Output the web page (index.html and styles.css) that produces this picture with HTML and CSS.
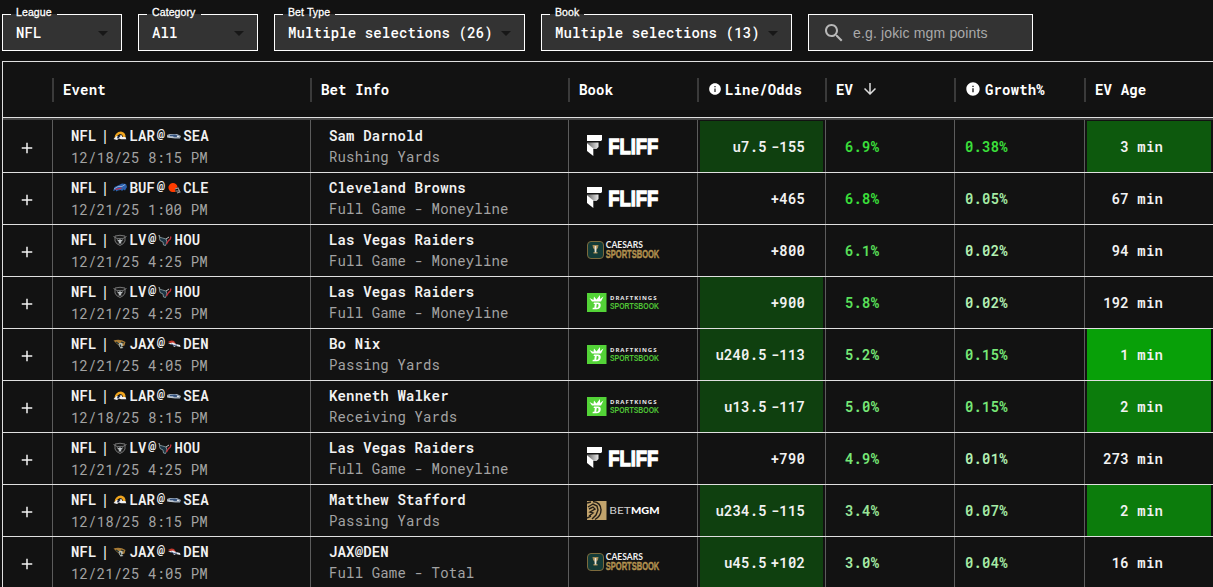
FILE: index.html
```html
<!DOCTYPE html>
<html lang="en">
<head>
  <meta charset="UTF-8">
  <meta name="viewport" content="width=device-width, initial-scale=1.0">
  <title>Positive EV</title>
  <link rel="stylesheet" href="styles.css">
</head>
<body>
  <!-- shared icons -->
  <svg class="sprite" width="0" height="0">
    <defs>
      <linearGradient id="fold" x1="0" y1="0" x2="1" y2="0">
        <stop offset="0.2" stop-color="#777"/>
        <stop offset="1" stop-color="#e8e8e8"/>
      </linearGradient>
    </defs>
    <symbol id="caret" viewBox="0 0 24 24"><path d="M7 10l5 5 5-5z"/></symbol>
    <symbol id="search" viewBox="0 0 24 24"><path d="M15.5 14h-.79l-.28-.27C15.41 12.59 16 11.11 16 9.5 16 5.91 13.09 3 9.5 3S3 5.91 3 9.5 5.91 16 9.5 16c1.61 0 3.09-.59 4.23-1.57l.27.28v.79l5 4.99L20.49 19l-4.99-5zm-6 0C7.01 14 5 11.99 5 9.5S7.01 5 9.5 5 14 7.01 14 9.5 11.99 14 9.5 14z"/></symbol>
    <symbol id="info" viewBox="0 0 24 24"><path d="M12 2C6.48 2 2 6.48 2 12s4.48 10 10 10 10-4.48 10-10S17.52 2 12 2zm1 15h-2v-6h2v6zm0-8h-2V7h2v2z"/></symbol>
    <symbol id="down" viewBox="0 0 24 24"><path d="M20 12l-1.41-1.41L13 16.17V4h-2v12.17l-5.58-5.59L4 12l8 8 8-8z"/></symbol>
    <symbol id="plus" viewBox="0 0 24 24"><path d="M19 13h-6v6h-2v-6H5v-2h6V5h2v6h6v2z"/></symbol>

    <symbol id="lar" viewBox="0 0 14 14">
      <path d="M1.500 9Q2 3 8 2.500Q13 3.500 12.500 8.500L10 9Q10 5 7 5Q4 6 4 8z" fill="#f0a51e"/>
      <path d="M.5 10L3.500 7l2.500 1 2-2.500L9.500 8l3 0 .8 2.200H8L6 9.500 4 11z" fill="#f2f2f2"/>
      <path d="M4 8.500l2.500-2.500 1 1L5 10z" fill="#1d2b4c"/>
    </symbol>
    <symbol id="sea" viewBox="0 0 14 14">
      <path d="M0 6L2.500 5H10l4 2-1 2.500H8L0 8.500z" fill="#9aa6b4"/>
      <path d="M3 6l5-.5 4 1.500-3 1-6-.5z" fill="#34527e"/>
      <path d="M0 7.500h6l1 1H2zM10 6.500l2 .5v1h-2z" fill="#dce2e8"/>
    </symbol>
    <symbol id="buf" viewBox="0 0 14 14">
      <path d="M0 10l1.500-4L5 4.500 9 2.500l4 .5 1 3-2 3.500-1.500-1L9 10l-1-1-3 .5-2 1 0-1.500z" fill="#2b62ae"/>
      <path d="M1 8l4-2.500 4 0 3-2" stroke="#b9c9e8" stroke-width=".7" fill="none"/>
      <path d="M2.500 8.500l6-1.500" stroke="#d7263d" stroke-width="1.100"/>
    </symbol>
    <symbol id="cle" viewBox="0 0 14 14">
      <path d="M1.500 7a4.500 4.500 0 0 1 9-1L8 8l.5 3H5Q2 10.500 1.500 7z" fill="#ff3c00"/>
      <path d="M8 8l3-1 2 4-3 1M8.500 10h4" stroke="#a09a98" stroke-width="1.100" fill="none"/>
    </symbol>
    <symbol id="lv" viewBox="0 0 14 14">
      <path d="M2 3q5-1.500 10 0v5q-1 3-5 4.500Q3 11 2 8z" fill="#1a1a1a" stroke="#8b8b8b" stroke-width=".8"/>
      <path d="M4 5.500h6l-.5 2L8 9l.5 1.500h-3L6 9 4.500 7.500z" fill="#b9bdbf"/>
      <path d="M4.500 6.500h2M7.500 6.500h2" stroke="#222" stroke-width="1"/>
      <path d="M.5 3.500l3.500 2M13.500 3.500L10 5.500" stroke="#777" stroke-width="1"/>
    </symbol>
    <symbol id="hou" viewBox="0 0 14 14">
      <path d="M1 2Q1 5 4.500 5L8 6l1 3-1.500 3.500-2-.5L5 9 2 7.500z" fill="#1b3342" stroke="#93a5aa" stroke-width=".8"/>
      <path d="M12.500 3.500Q13.500 6 10.500 7.500L8.500 11" stroke="#c62f3a" stroke-width="1.400" fill="none"/>
      <path d="M8 6l3-2" stroke="#d8dcdc" stroke-width=".9"/>
    </symbol>
    <symbol id="jax" viewBox="0 0 14 14">
      <path d="M.5 3.500Q7 1.500 12.500 5L11.500 8.500 8 10 4 7z" fill="#a87b35"/>
      <path d="M5 6l4 0 1 2.500-1.500 1 2 1.500-3 .5L6 9z" fill="#b9c0ba"/>
      <path d="M3 5l3 2M8 5l3 1M7 7.500l1 2.500" stroke="#1d343b" stroke-width="1.200"/>
    </symbol>
    <symbol id="den" viewBox="0 0 14 14">
      <path d="M1 5q3-2.500 6-1l2 3H5z" fill="#c2382c"/>
      <path d="M1 6.500l5-1 3 1.500 4 1 .5 2L9 9l-2 1-1-2z" fill="#e9ecf2"/>
      <path d="M4 7l3 1.500 3-.5" stroke="#26406c" stroke-width=".9" fill="none"/>
    </symbol>

    <symbol id="fliff" viewBox="0 0 74 25">
      <path d="M0 1h15v5L14 7H0z" fill="#fff"/>
      <path d="M0 8.500h11.500v4.500L9.500 15H6z" fill="url(#fold)"/>
      <path d="M0 9l6.300 5.500V22L0 17z" fill="#fff"/>
      <text class="fliff-text" x="21.300" y="19.500" textLength="50" lengthAdjust="spacingAndGlyphs">FLIFF</text>
    </symbol>
    <symbol id="caesars" viewBox="0 0 74 25">
      <rect x=".5" y="3.500" width="16" height="17" rx="3.500" fill="#153c38" stroke="#7c6a3c"/>
      <path d="M5.500 7h6q0 3.500-2 4.500L9 14h1.500v1.500h-4V14H8l-.5-2.500q-2-1-2-4.500z" fill="#a68b55"/>
      <path d="M7.700 8h1.600v6.500H7.700z" fill="#e6e6df"/>
      <text class="caesars-top" x="18.800" y="10.200" textLength="37" lengthAdjust="spacingAndGlyphs">CAESARS</text>
      <text class="caesars-bottom" x="18.800" y="20.100" textLength="53.500" lengthAdjust="spacingAndGlyphs">SPORTSBOOK</text>
    </symbol>
    <symbol id="draftkings" viewBox="0 0 74 25">
      <path d="M0 3h19.500v19H0z" fill="#53d337"/>
      <path d="M2.500 8l4 2L7 6.500l2.500 3L13 5l0 4 3.500-2.500-2.500 5H5z" fill="#fff"/>
      <path d="M7 12.500h4q3 0 2.700 3.300T9.500 19.300H5.500l.3-1.500h1.500l.5-3.800H6.500z" fill="#fff"/>
      <path d="M9.800 14h.8q1.200 0 .9 1.900t-1.700 1.900h-.6z" fill="#53d337"/>
      <text class="dk-top" x="23" y="10.400" textLength="46.500">DRAFTKINGS</text>
      <text class="dk-bottom" x="23" y="19.200" textLength="49" lengthAdjust="spacingAndGlyphs">SPORTSBOOK</text>
    </symbol>
    <symbol id="betmgm" viewBox="0 0 74 25">
      <path d="M0 3h19.500v19H0z" fill="#c2a36c"/>
      <path d="M6 3.500q8 1 8 8.500 0 6-6 9.500M1 9l5-3 4 2 1 4-2 5-4 4M2 11l4-2 2 2-5 3 3 1-4 3M0 5l4-1M0 20l4-2" stroke="#241f18" stroke-width="1.400" fill="none"/>
      <text class="mgm-thin" x="22.300" y="16.200" textLength="21.500" lengthAdjust="spacingAndGlyphs">BET</text>
      <text class="mgm-bold" x="44" y="16.200" textLength="28.500" lengthAdjust="spacingAndGlyphs">MGM</text>
    </symbol>
  </svg>

  <div class="filters">
    <div class="select">
      <label>League</label>
      <span>NFL</span>
      <svg><use href="#caret"/></svg>
    </div>
    <div class="select">
      <label>Category</label>
      <span>All</span>
      <svg><use href="#caret"/></svg>
    </div>
    <div class="select wide">
      <label>Bet Type</label>
      <span>Multiple selections (26)</span>
      <svg><use href="#caret"/></svg>
    </div>
    <div class="select wide">
      <label>Book</label>
      <span>Multiple selections (13)</span>
      <svg><use href="#caret"/></svg>
    </div>
    <div class="search">
      <svg><use href="#search"/></svg>
      <input type="text" placeholder="e.g. jokic mgm points">
    </div>
  </div>

  <div class="table">
    <div class="row header">
      <div></div>
      <div class="head">Event</div>
      <div class="head">Bet Info</div>
      <div class="head">Book</div>
      <div class="head"><svg class="info small"><use href="#info"/></svg>Line/Odds</div>
      <div class="head">EV<svg class="sort"><use href="#down"/></svg></div>
      <div class="head"><svg class="info"><use href="#info"/></svg>Growth%</div>
      <div class="head">EV Age</div>
    </div>

    <div class="row">
      <div class="cell expand"><svg><use href="#plus"/></svg></div>
      <div class="cell event">
        <div class="teams"><b>NFL |</b><svg><use href="#lar"/></svg>LAR<i>@</i><svg><use href="#sea"/></svg>SEA</div>
        <div class="sub">12/18/25 8:15 PM</div>
      </div>
      <div class="cell bet"><div>Sam Darnold</div><div class="sub">Rushing Yards</div></div>
      <div class="cell book"><svg><use href="#fliff"/></svg></div>
      <div class="cell odds"><div class="fill hot"><span>u7.5</span><span>-155</span></div></div>
      <div class="cell ev g1">6.9%</div>
      <div class="cell growth g1">0.38%</div>
      <div class="cell age"><div class="fill age-3">3 min</div></div>
    </div>

    <div class="row">
      <div class="cell expand"><svg><use href="#plus"/></svg></div>
      <div class="cell event">
        <div class="teams"><b>NFL |</b><svg><use href="#buf"/></svg>BUF<i>@</i><svg><use href="#cle"/></svg>CLE</div>
        <div class="sub">12/21/25 1:00 PM</div>
      </div>
      <div class="cell bet"><div>Cleveland Browns</div><div class="sub">Full Game - Moneyline</div></div>
      <div class="cell book"><svg><use href="#fliff"/></svg></div>
      <div class="cell odds"><div class="fill"><span>+465</span></div></div>
      <div class="cell ev g1">6.8%</div>
      <div class="cell growth g5">0.05%</div>
      <div class="cell age"><div class="fill">67 min</div></div>
    </div>

    <div class="row">
      <div class="cell expand"><svg><use href="#plus"/></svg></div>
      <div class="cell event">
        <div class="teams"><b>NFL |</b><svg><use href="#lv"/></svg>LV<i>@</i><svg><use href="#hou"/></svg>HOU</div>
        <div class="sub">12/21/25 4:25 PM</div>
      </div>
      <div class="cell bet"><div>Las Vegas Raiders</div><div class="sub">Full Game - Moneyline</div></div>
      <div class="cell book"><svg><use href="#caesars"/></svg></div>
      <div class="cell odds"><div class="fill"><span>+800</span></div></div>
      <div class="cell ev g2">6.1%</div>
      <div class="cell growth g6">0.02%</div>
      <div class="cell age"><div class="fill">94 min</div></div>
    </div>

    <div class="row">
      <div class="cell expand"><svg><use href="#plus"/></svg></div>
      <div class="cell event">
        <div class="teams"><b>NFL |</b><svg><use href="#lv"/></svg>LV<i>@</i><svg><use href="#hou"/></svg>HOU</div>
        <div class="sub">12/21/25 4:25 PM</div>
      </div>
      <div class="cell bet"><div>Las Vegas Raiders</div><div class="sub">Full Game - Moneyline</div></div>
      <div class="cell book"><svg><use href="#draftkings"/></svg></div>
      <div class="cell odds"><div class="fill hot"><span>+900</span></div></div>
      <div class="cell ev g2">5.8%</div>
      <div class="cell growth g6">0.02%</div>
      <div class="cell age"><div class="fill">192 min</div></div>
    </div>

    <div class="row">
      <div class="cell expand"><svg><use href="#plus"/></svg></div>
      <div class="cell event">
        <div class="teams"><b>NFL |</b><svg><use href="#jax"/></svg>JAX<i>@</i><svg><use href="#den"/></svg>DEN</div>
        <div class="sub">12/21/25 4:05 PM</div>
      </div>
      <div class="cell bet"><div>Bo Nix</div><div class="sub">Passing Yards</div></div>
      <div class="cell book"><svg><use href="#draftkings"/></svg></div>
      <div class="cell odds"><div class="fill hot"><span>u240.5</span><span>-113</span></div></div>
      <div class="cell ev g3">5.2%</div>
      <div class="cell growth g3">0.15%</div>
      <div class="cell age"><div class="fill age-1">1 min</div></div>
    </div>

    <div class="row">
      <div class="cell expand"><svg><use href="#plus"/></svg></div>
      <div class="cell event">
        <div class="teams"><b>NFL |</b><svg><use href="#lar"/></svg>LAR<i>@</i><svg><use href="#sea"/></svg>SEA</div>
        <div class="sub">12/18/25 8:15 PM</div>
      </div>
      <div class="cell bet"><div>Kenneth Walker</div><div class="sub">Receiving Yards</div></div>
      <div class="cell book"><svg><use href="#draftkings"/></svg></div>
      <div class="cell odds"><div class="fill hot"><span>u13.5</span><span>-117</span></div></div>
      <div class="cell ev g3">5.0%</div>
      <div class="cell growth g3">0.15%</div>
      <div class="cell age"><div class="fill age-2">2 min</div></div>
    </div>

    <div class="row">
      <div class="cell expand"><svg><use href="#plus"/></svg></div>
      <div class="cell event">
        <div class="teams"><b>NFL |</b><svg><use href="#lv"/></svg>LV<i>@</i><svg><use href="#hou"/></svg>HOU</div>
        <div class="sub">12/21/25 4:25 PM</div>
      </div>
      <div class="cell bet"><div>Las Vegas Raiders</div><div class="sub">Full Game - Moneyline</div></div>
      <div class="cell book"><svg><use href="#fliff"/></svg></div>
      <div class="cell odds"><div class="fill"><span>+790</span></div></div>
      <div class="cell ev g3">4.9%</div>
      <div class="cell growth g6">0.01%</div>
      <div class="cell age"><div class="fill">273 min</div></div>
    </div>

    <div class="row">
      <div class="cell expand"><svg><use href="#plus"/></svg></div>
      <div class="cell event">
        <div class="teams"><b>NFL |</b><svg><use href="#lar"/></svg>LAR<i>@</i><svg><use href="#sea"/></svg>SEA</div>
        <div class="sub">12/18/25 8:15 PM</div>
      </div>
      <div class="cell bet"><div>Matthew Stafford</div><div class="sub">Passing Yards</div></div>
      <div class="cell book"><svg><use href="#betmgm"/></svg></div>
      <div class="cell odds"><div class="fill hot"><span>u234.5</span><span>-115</span></div></div>
      <div class="cell ev g4">3.4%</div>
      <div class="cell growth g5">0.07%</div>
      <div class="cell age"><div class="fill age-2">2 min</div></div>
    </div>

    <div class="row">
      <div class="cell expand"><svg><use href="#plus"/></svg></div>
      <div class="cell event">
        <div class="teams"><b>NFL |</b><svg><use href="#jax"/></svg>JAX<i>@</i><svg><use href="#den"/></svg>DEN</div>
        <div class="sub">12/21/25 4:05 PM</div>
      </div>
      <div class="cell bet"><div>JAX@DEN</div><div class="sub">Full Game - Total</div></div>
      <div class="cell book"><svg><use href="#caesars"/></svg></div>
      <div class="cell odds"><div class="fill hot"><span>u45.5</span><span>+102</span></div></div>
      <div class="cell ev g5">3.0%</div>
      <div class="cell growth g5">0.04%</div>
      <div class="cell age"><div class="fill">16 min</div></div>
    </div>
  </div>
</body>
</html>
```

FILE: styles.css
```css
* {
  margin: 0;
  padding: 0;
  box-sizing: border-box;
}

body {
  background-color: #121212;
  color: #f2f2f2;
  font-family: "Roboto Mono", "Liberation Mono", monospace;
  font-size: 14px;
  font-weight: 500;
  letter-spacing: 0.15px;
  height: 100vh;
  overflow: hidden;
}

svg {
  display: block;
  fill: currentColor;
  flex-shrink: 0;
}

.sprite {
  position: absolute;
}

/* filters */
.filters {
  display: flex;
  gap: 16px;
  padding: 14px 0 10px 2px;
}

.select,
.search {
  display: flex;
  align-items: center;
  height: 37px;
  background-color: #333;
  border: 1px solid #fff;
}

.select {
  position: relative;
  width: 120px;
  padding: 0 6px 0 13px;
  justify-content: space-between;
  color: #fff;
  letter-spacing: 0.13px;
}

.select.wide {
  width: 251px;
}

.select label {
  position: absolute;
  top: -9px;
  left: 8px;
  padding: 0 5px;
  background: linear-gradient(#121212 8px, #333 8px);
  font-family: Arial, "Liberation Sans", sans-serif;
  font-size: 10.5px;
  line-height: 12px;
  letter-spacing: 0.11px;
  -webkit-text-stroke: 0.3px #fff;
}

.select svg {
  width: 24px;
  height: 24px;
  color: #171717;
}

.search {
  width: 225px;
  padding-left: 13px;
}

.search svg {
  width: 24px;
  height: 24px;
  color: #b8b8b8;
}

.search input {
  width: 170px;
  margin-left: 7px;
  background: none;
  border: none;
  outline: none;
  font-family: Arial, "Liberation Sans", sans-serif;
  font-size: 14px;
  letter-spacing: 0.15px;
}

.search input::placeholder {
  color: #aaa;
}

/* table */
.table {
  margin-left: 2px;
  border-top: 1px solid #e0e0e0;
  border-left: 1px solid #e0e0e0;
}

.row {
  display: grid;
  grid-template-columns: 50px 258px 258px 129px 128px 129px 130px 1fr;
  height: 52px;
  border-bottom: 1px solid #e0e0e0;
}

.row.header {
  height: 58px;
  align-items: center;
  border-bottom: 2px solid #444;
  box-shadow: inset 0 -1px #e0e0e0;
}

.header + .row {
  height: 53px;
}

.header + .row .cell {
  padding-top: 1px;
}

.head {
  display: flex;
  align-items: center;
  height: 24px;
  margin: -1px 0 0 -1px;
  padding-left: 9px;
  border-left: 2px solid #3a3a3a;
  color: #fff;
  font-weight: 700;
}

.info {
  width: 16px;
  height: 16px;
  margin: -1px 4px 0 0;
}

.info.small {
  width: 14px;
  height: 14px;
  margin: -1px 3px 0 0;
}

.sort {
  width: 18px;
  height: 18px;
  margin: -1px 0 0 8px;
  color: #ddd;
}

.cell {
  display: flex;
  align-items: center;
  border-right: 1px solid #5c5c5c;
  font-weight: 600;
}

.cell:last-child {
  border-right: none;
}

.expand {
  justify-content: center;
}

.expand svg {
  width: 18px;
  height: 18px;
  margin: 3px 1px 0 0;
}

.event,
.bet {
  flex-direction: column;
  align-items: flex-start;
  justify-content: center;
  padding: 0 0 1px 18px;
  line-height: 21px;
}

.event .sub {
  margin-top: 1px;
  margin-bottom: -1px;
}

.sub {
  color: #a3a3a3;
  font-weight: 400;
}

.teams {
  display: flex;
  align-items: center;
}

.teams b {
  width: 42px;
  font-weight: inherit;
  word-spacing: -4.5px;
}

.teams svg {
  width: 14px;
  height: 14px;
  margin-right: 2.5px;
}

.teams i {
  width: 11.5px;
  margin-top: -2px;
  padding-left: 1.5px;
  font-style: normal;
  font-weight: 500;
}

.book {
  padding-left: 18px;
}

.book svg {
  width: 74px;
  height: 25px;
}

.fill {
  display: flex;
  flex: 1;
  align-items: center;
  align-self: stretch;
  justify-content: flex-end;
  gap: 4px;
  margin: 0 2px;
}

.odds .fill {
  padding-right: 18px;
}

.age .fill {
  padding-right: 48px;
}

.hot {
  background-color: #0f400f;
}

.age-1 {
  background-color: #08a008;
}

.age-2 {
  background-color: #0c7c0c;
}

.age-3 {
  background-color: #0d590d;
}

.ev {
  padding-left: 19px;
}

.growth {
  padding-left: 10px;
}

.g1 { color: #3be03b; }
.g2 { color: #5ae05a; }
.g3 { color: #77e877; }
.g4 { color: #98e598; }
.g5 { color: #a5eba5; }
.g6 { color: #b3f0b3; }

/* sportsbook logos */
.fliff-text {
  fill: #fff;
  stroke: #fff;
  stroke-width: 1.3px;
  font: 700 22.5px "Liberation Sans", sans-serif;
  letter-spacing: 0;
}

.caesars-top {
  fill: #f2f2f2;
  font: 700 8.5px Lato, sans-serif;
  letter-spacing: 0;
}

.caesars-bottom {
  fill: #b3914f;
  stroke: #b3914f;
  stroke-width: 0.4px;
  font: 700 11.5px "Liberation Sans", sans-serif;
  letter-spacing: 0;
}

.dk-top {
  fill: #e8e8e8;
  font: 700 6px "Open Sans", sans-serif;
  letter-spacing: 0;
}

.dk-bottom {
  fill: #4fc436;
  font: 700 8.5px "Liberation Sans", sans-serif;
  letter-spacing: 0;
}

.mgm-thin {
  fill: #d0d0d0;
  font: 400 10px Lato, sans-serif;
  letter-spacing: 0;
}

.mgm-bold {
  fill: #fff;
  font: 900 10px Lato, sans-serif;
  letter-spacing: 0;
}
```
